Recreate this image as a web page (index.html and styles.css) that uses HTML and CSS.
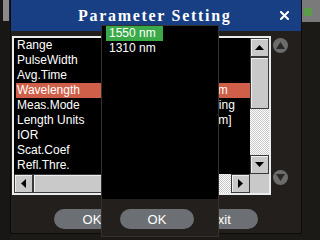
FILE: index.html
```html
<!DOCTYPE html>
<html lang="en">
<head>
    <meta charset="UTF-8">
    <title>Parameter Setting</title>
    <link rel="stylesheet" href="styles.css">
</head>
<body>
    <div class="side-left">
        <div class="handle"></div>
    </div>

    <div class="dialog">
        <div class="titlebar">
            <span class="title">Parameter Setting</span>
            <svg class="close" width="9" height="9" viewBox="0 0 9 9">
                <path d="M1 1L8 8M8 1L1 8" stroke="#fff" stroke-width="2" stroke-linecap="square"/>
            </svg>
        </div>

        <div class="body">
            <div class="listbox">
                <div class="rows">
                    <div class="row"><span>Range</span><span>Auto</span></div>
                    <div class="row"><span>PulseWidth</span><span>Auto</span></div>
                    <div class="row"><span>Avg.Time</span><span>15 s</span></div>
                    <div class="row selected"><span>Wavelength</span><span>1550 nm</span></div>
                    <div class="row"><span>Meas.Mode</span><span>Averaging</span></div>
                    <div class="row"><span>Length Units</span><span>Meter [m]</span></div>
                    <div class="row"><span>IOR</span><span>1.468</span></div>
                    <div class="row"><span>Scat.Coef</span><span>-79.4</span></div>
                    <div class="row"><span>Refl.Thre.</span><span>-40 dB</span></div>
                </div>
                <div class="vscroll">
                    <div class="sbtn">
                        <svg width="9" height="5" viewBox="0 0 9 5"><path d="M4.5 0L9 5H0Z" fill="#000"/></svg>
                    </div>
                    <div class="vthumb"></div>
                    <div class="track"></div>
                    <div class="sbtn">
                        <svg width="9" height="5" viewBox="0 0 9 5"><path d="M0 0H9L4.5 5Z" fill="#000"/></svg>
                    </div>
                </div>
                <div class="hscroll">
                    <div class="sbtn">
                        <svg width="5" height="9" viewBox="0 0 5 9"><path d="M5 0V9L0 4.5Z" fill="#000"/></svg>
                    </div>
                    <div class="hthumb"></div>
                    <div class="track"></div>
                    <div class="sbtn">
                        <svg width="5" height="9" viewBox="0 0 5 9"><path d="M0 0L5 4.5L0 9Z" fill="#000"/></svg>
                    </div>
                </div>
                <div class="corner"></div>
            </div>

            <div class="pager">
                <div class="round">
                    <svg width="9" height="7" viewBox="0 0 9 7"><path d="M4.5 0L9 7H0Z" fill="#2b2927"/></svg>
                </div>
                <div class="round">
                    <svg width="9" height="7" viewBox="0 0 9 7"><path d="M0 0H9L4.5 7Z" fill="#2b2927"/></svg>
                </div>
            </div>
        </div>

        <div class="actions">
            <button class="pill">OK</button>
            <button class="pill">Exit</button>
        </div>

        <div class="popup">
            <div class="options">
                <div class="option active">1550 nm</div>
                <div class="option">1310 nm</div>
            </div>
            <div class="popup-foot">
                <button class="pill small">OK</button>
            </div>
        </div>
    </div>

    <div class="side-right">
        <div class="battery">
            <div class="cell"></div>
        </div>
    </div>
</body>
</html>
```

FILE: styles.css
```css
body {
    margin: 0;
    width: 320px;
    height: 240px;
    overflow: hidden;
    display: flex;
    background-color: #1c1a17;
    font-family: "Liberation Sans", Arial, sans-serif;
    font-size: 12px;
    color: #ffffff;
}

.side-left {
    width: 10px;
    flex: none;
    background-color: #181716;
}

.handle {
    margin-left: 3px;
    width: 6px;
    height: 21px;
    background-color: #8a8a8a;
}

.dialog {
    position: relative;
    box-sizing: border-box;
    width: 292px;
    height: 234px;
    flex: none;
    border: 1px solid #0d0c0b;
    border-top: none;
    background-color: #221f1c;
}

.titlebar {
    height: 31px;
    display: flex;
    align-items: center;
    padding-left: 67px;
    padding-right: 12px;
    background-color: #183e83;
}

.title {
    font-family: "Liberation Serif", "Times New Roman", serif;
    font-weight: bold;
    font-size: 16px;
    letter-spacing: 1.7px;
    padding-top: 1px;
}

.close {
    margin-left: auto;
}

.body {
    display: flex;
    padding: 5px 0 0 1px;
}

.listbox {
    box-sizing: border-box;
    width: 259px;
    height: 159px;
    border: 2px solid #ececec;
    background-color: #000000;
    display: grid;
    grid-template-columns: 236px 19px;
    grid-template-rows: 136px 19px;
}

.rows {
    padding-left: 2px;
    overflow: hidden;
}

.row {
    height: 15px;
    line-height: 15px;
    padding-left: 1px;
    display: grid;
    grid-template-columns: 164px auto;
    white-space: nowrap;
}

.row.selected {
    background-color: #cf5f48;
}

.vscroll {
    display: flex;
    flex-direction: column;
}

.hscroll {
    display: flex;
}

.sbtn {
    box-sizing: border-box;
    width: 19px;
    height: 19px;
    flex: none;
    display: flex;
    align-items: center;
    justify-content: center;
    background-color: #c9c9c9;
    border: 1px solid #3a3a3a;
    box-shadow: inset 1px 1px #efefef;
}

.vthumb {
    box-sizing: border-box;
    height: 52px;
    flex: none;
    background-color: #c9c9c9;
    border: 1px solid #3a3a3a;
    box-shadow: inset 1px 1px #efefef;
}

.hthumb {
    box-sizing: border-box;
    width: 160px;
    flex: none;
    background-color: #c9c9c9;
    border: 1px solid #3a3a3a;
    box-shadow: inset 1px 1px #efefef;
}

.track {
    flex: 1;
    background-color: #ffffff;
    background-image: conic-gradient(#c8c8c8 25%, #ffffff 0 50%, #c8c8c8 0 75%, #ffffff 0);
    background-size: 2px 2px;
}

.corner {
    background-color: #c9c9c9;
}

.pager {
    margin-left: 2px;
    padding-top: 2px;
    height: 147px;
    display: flex;
    flex-direction: column;
    justify-content: space-between;
}

.round {
    width: 15px;
    height: 15px;
    border-radius: 50%;
    background-color: #6c6c6c;
    display: flex;
    align-items: center;
    justify-content: center;
}

.actions {
    display: flex;
    justify-content: center;
    gap: 52px;
    padding-top: 14px;
}

.pill {
    width: 76px;
    height: 20px;
    padding: 0;
    border: none;
    border-radius: 10px;
    background-color: #6c7074;
    color: #ffffff;
    font-family: "Liberation Sans", Arial, sans-serif;
    font-size: 13px;
}

.pill.small {
    width: 74px;
}

.popup {
    position: absolute;
    left: 90px;
    top: 25px;
    box-sizing: border-box;
    width: 118px;
    height: 212px;
    border: 1px solid #34312d;
    background-color: #221f1c;
    display: flex;
    flex-direction: column;
}

.options {
    height: 173px;
    padding-left: 4px;
    background-color: #000000;
}

.option {
    width: 57px;
    height: 15px;
    line-height: 15px;
    padding-left: 3px;
    box-sizing: border-box;
    white-space: nowrap;
}

.option.active {
    background-color: #3aa948;
}

.popup-foot {
    padding: 10px 0 0 18px;
}

.side-right {
    flex: 1;
    background-color: #1c1a17;
}

.battery {
    box-sizing: border-box;
    width: 18px;
    height: 22px;
    padding: 8px 0 0 2px;
    background-color: #7a7a7a;
}

.cell {
    width: 8px;
    height: 8px;
    background-color: #5a9c4c;
}
```
